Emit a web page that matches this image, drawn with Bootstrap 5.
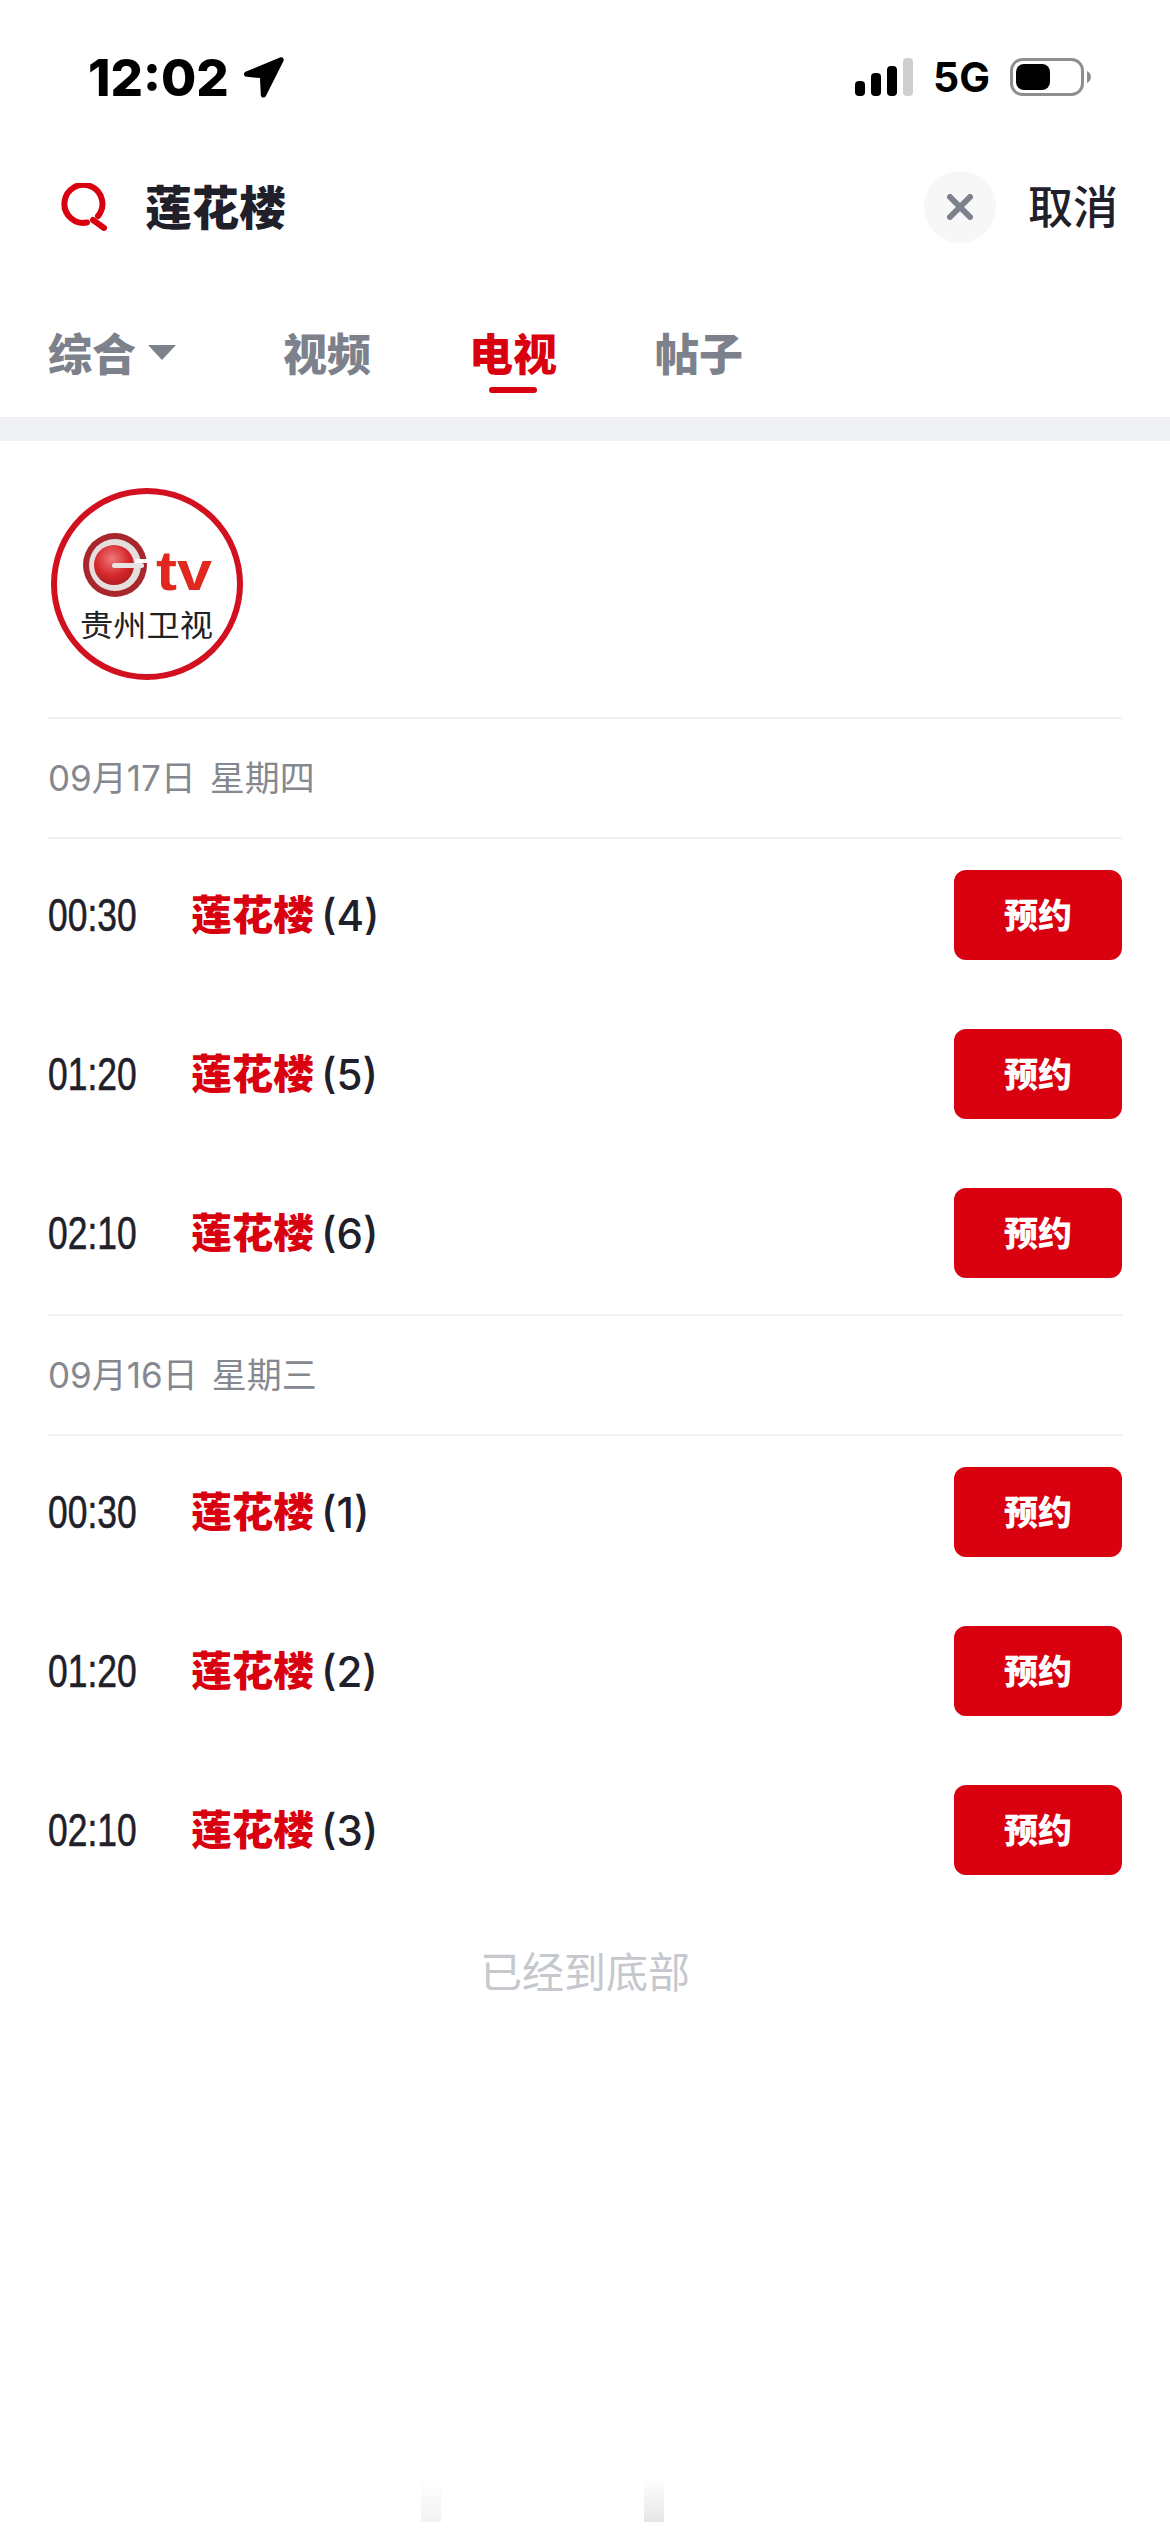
<!DOCTYPE html>
<html lang="zh-CN">
<head>
  <meta charset="UTF-8">
  <meta name="viewport" content="width=device-width, initial-scale=1.0">
  <title>莲花楼</title>
  <link href="https://cdn.jsdelivr.net/npm/bootstrap@5.3.3/dist/css/bootstrap.min.css" rel="stylesheet">
  <style>
    body {
      font-family: "Inter", "Noto Sans CJK SC", sans-serif;
      color: #1f2029;
      background: #fff;
    }
    .screen { position: relative; width: 1170px; height: 2532px; overflow: hidden; }

    /* status bar */
    .status-row { height: 154px; padding: 0 79px 0 88px; }
    .clock { font-size: 51px; font-weight: 800; line-height: 1; color: #000; }
    .clock-arrow { margin-left: 14px; }
    .net-label { font-size: 41px; font-weight: 700; line-height: 1; color: #000; margin: 0 20px 0 20px; }

    /* search */
    .search-row { height: 106px; padding: 0 52px 0 60px; }
    .search-term { font-size: 47px; font-weight: 900; line-height: 1; margin-left: 37px; }
    .clear-btn { width: 72px; height: 72px; border-radius: 50%; background: #f7f7f8; }
    .cancel-link { font-size: 45px; font-weight: 500; line-height: 1; margin-left: 32px; }

    /* tabs */
    .tab-row { height: 157px; padding: 73px 0 0 48px; gap: 98px; }
    .tab-item { font-size: 44px; font-weight: 900; line-height: 44px; color: #7d818c; }
    .tab-item.on { color: #d9000f; }
    .tab-bar { width: 48px; height: 6px; border-radius: 3px; background: #d9000f; margin-top: 10px; }
    .tab-caret {
      width: 0; height: 0; margin: 0 9px 6px 12px;
      border-left: 14px solid transparent;
      border-right: 14px solid transparent;
      border-top: 15px solid #7d818c;
    }
    .gap-band { height: 24px; background: #eff1f5; }

    /* channel */
    .channel-box { height: 276px; padding: 47px 0 0 51px; }
    .channel-logo { display: block; width: 192px; height: 192px; }

    /* schedule */
    .date-row {
      height: 122px; margin: 0 48px;
      border-top: 2px solid #f0f1f3; border-bottom: 2px solid #f0f1f3;
      font-size: 35px; font-weight: 400; color: #85888f; line-height: 1;
    }
    .date-row span + span { margin-left: 14px; }
    .show-list { margin: 0 48px; padding: 31px 0 36px; gap: 69px; }
    .show-time { width: 143px; }
    .show-time span {
      display: inline-block; transform: scaleX(.77); transform-origin: left center;
      font-family: "Liberation Sans", sans-serif;
      font-size: 46px; line-height: 1;
      -webkit-text-stroke: .6px #1f2029;
    }
    .show-name { font-size: 41px; font-weight: 900; line-height: 1; color: #d9000f; }
    .show-ep { font-size: 42px; font-weight: 500; line-height: 1; margin: 2px 0 0 7px; }
    .book-btn {
      width: 168px; height: 90px; padding: 0; border: 0; border-radius: 12px;
      background: #d9000f; color: #fff; font-size: 34px; font-weight: 900;
    }
    .list-end { margin-top: 37px; font-size: 42px; line-height: 50px; color: #c5c8cd; }

    /* soft marks above the home bar */
    .edge-mark {
      position: absolute; top: 2478px; width: 20px; height: 44px;
      background: linear-gradient(#fff, #e6e6e6);
    }
  </style>
</head>
<body>
<div class="screen">

  <!-- status bar -->
  <div class="status-row d-flex align-items-center justify-content-between">
    <div class="d-flex align-items-center">
      <span class="clock">12:02</span>
      <svg class="clock-arrow" width="41" height="41" viewBox="0 0 41 41">
        <path d="M37 .5 3 14.500c-3 1.200-2.500 5 .6 5.300L17 21l.8 17c.2 3 4 3.500 5.200.8L40.500 4c1-2.500-1-4.500-3.500-3.500z" fill="#000"/>
      </svg>
    </div>
    <div class="d-flex align-items-center">
      <svg width="58" height="38" viewBox="0 0 58 38">
        <rect x="0" y="23" width="10" height="15" rx="4" fill="#000"/>
        <rect x="16" y="15" width="10" height="23" rx="4" fill="#000"/>
        <rect x="32" y="8" width="10" height="30" rx="4" fill="#000"/>
        <rect x="48" y="0" width="10" height="38" rx="4" fill="#cfcfcf"/>
      </svg>
      <span class="net-label">5G</span>
      <svg width="81" height="38" viewBox="0 0 81 38">
        <rect x="1.500" y="1.500" width="71" height="35" rx="11" fill="none" stroke="#8e8e8e" stroke-width="3"/>
        <rect x="6" y="6" width="34" height="26" rx="8" fill="#000"/>
        <path d="M77 13c2.500 1 4 3.500 4 6s-1.500 5-4 6z" fill="#8e8e8e"/>
      </svg>
    </div>
  </div>

  <!-- search field -->
  <div class="search-row d-flex align-items-center">
    <svg width="48" height="48" viewBox="0 0 48 48">
      <path d="M38 33A19 19 0 1 0 27 39.500" fill="none" stroke="#d9000f" stroke-width="6" stroke-linecap="round"/>
      <path d="M33 37l11 8" fill="none" stroke="#d9000f" stroke-width="6" stroke-linecap="round"/>
    </svg>
    <span class="search-term">莲花楼</span>
    <div class="clear-btn d-flex align-items-center justify-content-center ms-auto">
      <svg width="26" height="26" viewBox="0 0 26 26">
        <path d="M3 3l20 20M23 3 3 23" stroke="#7d818c" stroke-width="6" stroke-linecap="round"/>
      </svg>
    </div>
    <span class="cancel-link">取消</span>
  </div>

  <!-- result type tabs -->
  <div class="tab-row d-flex align-items-start">
    <div class="tab-item d-flex align-items-center">综合<span class="tab-caret"></span></div>
    <div class="tab-item">视频</div>
    <div class="tab-item on d-flex flex-column align-items-center">电视<span class="tab-bar"></span></div>
    <div class="tab-item">帖子</div>
  </div>
  <div class="gap-band"></div>

  <!-- channel logo -->
  <div class="channel-box">
    <svg class="channel-logo" viewBox="0 0 192 192">
      <defs>
        <radialGradient id="ballFill" cx="45%" cy="35%" r="70%">
          <stop offset="0" stop-color="#ee7a7a"/>
          <stop offset=".6" stop-color="#d5282c"/>
          <stop offset="1" stop-color="#a81c20"/>
        </radialGradient>
      </defs>
      <circle cx="96" cy="96" r="93" fill="#fff" stroke="#d3101f" stroke-width="6"/>
      <circle cx="64" cy="77" r="32" fill="#a8272d"/>
      <circle cx="64" cy="77" r="26" fill="#e4dedd"/>
      <circle cx="63" cy="77" r="20" fill="url(#ballFill)"/>
      <rect x="84" y="71" width="14" height="4" fill="#fff"/>
      <rect x="61" y="75" width="32" height="5" rx="2.500" fill="#e9e4e4"/>
      <text x="105" y="102" font-family="Liberation Sans, sans-serif" font-size="56" font-weight="700" fill="#e0281e" textLength="56" lengthAdjust="spacingAndGlyphs">tv</text>
      <text x="29" y="148" font-family="Noto Sans CJK SC, sans-serif" font-size="30" fill="#222" textLength="133" lengthAdjust="spacingAndGlyphs">贵州卫视</text>
    </svg>
  </div>

  <!-- 09-17 -->
  <div class="date-row d-flex align-items-center"><span>09月17日</span><span>星期四</span></div>
  <div class="show-list d-flex flex-column">
    <div class="d-flex align-items-center">
      <div class="show-time"><span>00:30</span></div><span class="show-name">莲花楼</span><span class="show-ep">(4)</span>
      <button type="button" class="btn book-btn ms-auto">预约</button>
    </div>
    <div class="d-flex align-items-center">
      <div class="show-time"><span>01:20</span></div><span class="show-name">莲花楼</span><span class="show-ep">(5)</span>
      <button type="button" class="btn book-btn ms-auto">预约</button>
    </div>
    <div class="d-flex align-items-center">
      <div class="show-time"><span>02:10</span></div><span class="show-name">莲花楼</span><span class="show-ep">(6)</span>
      <button type="button" class="btn book-btn ms-auto">预约</button>
    </div>
  </div>

  <!-- 09-16 -->
  <div class="date-row d-flex align-items-center"><span>09月16日</span><span>星期三</span></div>
  <div class="show-list d-flex flex-column">
    <div class="d-flex align-items-center">
      <div class="show-time"><span>00:30</span></div><span class="show-name">莲花楼</span><span class="show-ep">(1)</span>
      <button type="button" class="btn book-btn ms-auto">预约</button>
    </div>
    <div class="d-flex align-items-center">
      <div class="show-time"><span>01:20</span></div><span class="show-name">莲花楼</span><span class="show-ep">(2)</span>
      <button type="button" class="btn book-btn ms-auto">预约</button>
    </div>
    <div class="d-flex align-items-center">
      <div class="show-time"><span>02:10</span></div><span class="show-name">莲花楼</span><span class="show-ep">(3)</span>
      <button type="button" class="btn book-btn ms-auto">预约</button>
    </div>
  </div>

  <div class="list-end text-center">已经到底部</div>

  <div class="edge-mark" style="left: 421px; opacity: .5"></div>
  <div class="edge-mark" style="left: 644px"></div>
</div>
<script src="https://cdn.jsdelivr.net/npm/bootstrap@5.3.3/dist/js/bootstrap.bundle.min.js"></script>
</body>
</html>
